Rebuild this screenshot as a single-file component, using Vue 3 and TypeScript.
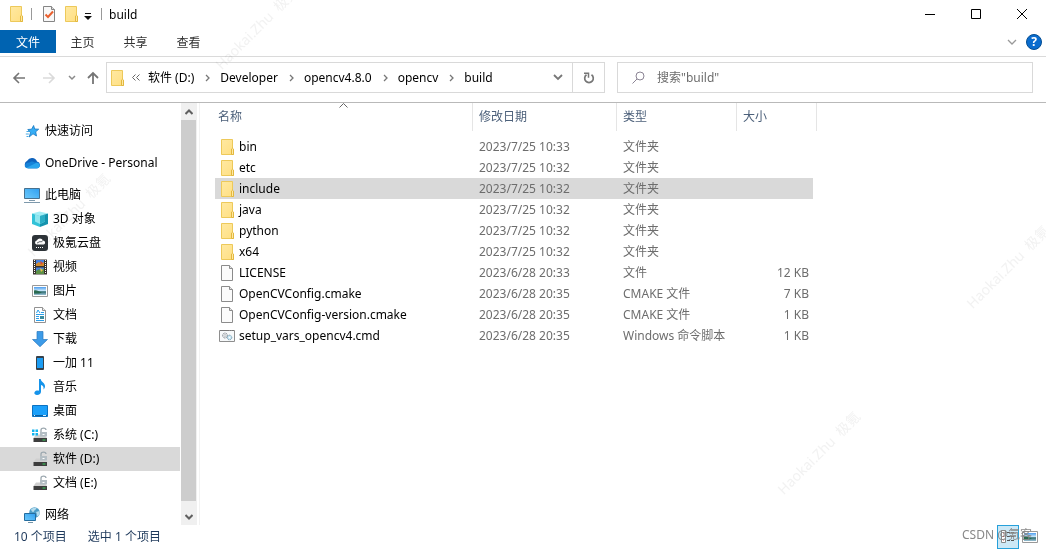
<script setup lang="ts">
interface TreeItem {
  label: string
  icon: string
  selected?: boolean
}

interface TreeGroup extends TreeItem {
  children?: TreeItem[]
}

interface FileRow {
  name: string
  icon: string
  date: string
  type: string
  size?: string
  selected?: boolean
}

const tabs: string[] = ['主页', '共享', '查看']
const crumbs: string[] = ['软件 (D:)', 'Developer', 'opencv4.8.0', 'opencv', 'build']

const tree: TreeGroup[] = [
  { label: '快速访问', icon: 'star' },
  { label: 'OneDrive - Personal', icon: 'cloud' },
  {
    label: '此电脑',
    icon: 'computer',
    children: [
      { label: '3D 对象', icon: 'cube' },
      { label: '极氪云盘', icon: 'disk-cloud' },
      { label: '视频', icon: 'video' },
      { label: '图片', icon: 'picture' },
      { label: '文档', icon: 'document' },
      { label: '下载', icon: 'download' },
      { label: '一加 11', icon: 'phone' },
      { label: '音乐', icon: 'music' },
      { label: '桌面', icon: 'desktop' },
      { label: '系统 (C:)', icon: 'drive-system' },
      { label: '软件 (D:)', icon: 'drive', selected: true },
      { label: '文档 (E:)', icon: 'drive' },
    ],
  },
  { label: '网络', icon: 'network' },
]

const columns = [
  { key: 'name', label: '名称' },
  { key: 'date', label: '修改日期' },
  { key: 'type', label: '类型' },
  { key: 'size', label: '大小' },
]

const files: FileRow[] = [
  { name: 'bin', icon: 'folder', date: '2023/7/25 10:33', type: '文件夹' },
  { name: 'etc', icon: 'folder', date: '2023/7/25 10:32', type: '文件夹' },
  { name: 'include', icon: 'folder', date: '2023/7/25 10:32', type: '文件夹', selected: true },
  { name: 'java', icon: 'folder', date: '2023/7/25 10:32', type: '文件夹' },
  { name: 'python', icon: 'folder', date: '2023/7/25 10:32', type: '文件夹' },
  { name: 'x64', icon: 'folder', date: '2023/7/25 10:32', type: '文件夹' },
  { name: 'LICENSE', icon: 'file', date: '2023/6/28 20:33', type: '文件', size: '12 KB' },
  { name: 'OpenCVConfig.cmake', icon: 'file', date: '2023/6/28 20:35', type: 'CMAKE 文件', size: '7 KB' },
  { name: 'OpenCVConfig-version.cmake', icon: 'file', date: '2023/6/28 20:35', type: 'CMAKE 文件', size: '1 KB' },
  { name: 'setup_vars_opencv4.cmd', icon: 'script', date: '2023/6/28 20:35', type: 'Windows 命令脚本', size: '1 KB' },
]

const watermarks = ['top', 'left', 'right', 'bottom']
</script>

<template>
  <div class="window">
    <svg class="sprite" aria-hidden="true">
      <defs>
        <linearGradient id="g-folder" x1="0" y1="0" x2="1" y2="1">
          <stop offset="0" stop-color="#ffe9a2" /><stop offset="1" stop-color="#ffdf82" />
        </linearGradient>
        <linearGradient id="g-screen" x1="0" y1="1" x2="1" y2="0">
          <stop offset="0" stop-color="#6cc8fb" /><stop offset="0.5" stop-color="#4fb5f5" /><stop offset="1" stop-color="#2e9df0" />
        </linearGradient>
        <linearGradient id="g-photo" x1="0" y1="0" x2="0" y2="1">
          <stop offset="0" stop-color="#4c9df0" /><stop offset="0.45" stop-color="#c7e6fa" /><stop offset="0.6" stop-color="#2c6a6e" /><stop offset="1" stop-color="#9cc3d8" />
        </linearGradient>
      </defs>
      <symbol id="i-folder" viewBox="0 0 16 16">
        <path d="M2.500.500h11v9l1 1v5h-12z" fill="url(#g-folder)" stroke="#edc95a" />
        <path d="M12.500 15.500v-5.500l1-.8 1 .8v5.500z" fill="#ffe9a2" stroke="#e3b83f" />
      </symbol>
      <symbol id="i-file" viewBox="0 0 16 16">
        <path d="M2.500.500h8l3 3v12h-11z" fill="#fbfbfb" stroke="#8b8b8b" />
        <path d="M10.500.500v3h3" fill="#e5e5e5" stroke="#8b8b8b" />
      </symbol>
      <symbol id="i-script" viewBox="0 0 16 16">
        <path d="M.5 2.500h15v11H.500z" fill="#f7f9fa" stroke="#8e8e8e" />
        <path d="M1 2.500h14" stroke="#777" stroke-dasharray="9 1 1 1" />
        <circle cx="6" cy="7.500" r="2.500" fill="#e3e7ea" stroke="#878d94" stroke-dasharray="1.200 .600" />
        <circle cx="6" cy="7.500" r="1" fill="#fff" stroke="#a5a9ad" stroke-width=".6" />
        <circle cx="10.500" cy="9.500" r="2.300" fill="#c8e5f3" stroke="#7199ae" stroke-dasharray="1.200 .600" />
        <circle cx="10.500" cy="9.500" r=".8" fill="#fff" />
      </symbol>
      <symbol id="i-check" viewBox="0 0 16 16">
        <path d="M2.500.500h8l3 3v12h-11z" fill="#f8f8f8" stroke="#858585" />
        <path d="M10.500.500v3h3" fill="#ddd" stroke="#858585" />
        <path d="M4.500 8.500l2.500 2.500 5-5.500" fill="none" stroke="#e9602f" stroke-width="2" />
      </symbol>
      <symbol id="i-star" viewBox="0 0 16 16">
        <path d="M9.600 2.500l1.100 3.500 4 .2-3 2.600.8 4.200-3.500-2.200-3.800 3.200 1.300-4.300L3.800 6.500l3.800-.3z" fill="#35adf5" stroke="#1476c0" stroke-width=".8" />
        <path d="M2.500 8.500h3M1.800 11h3M2.500 13.500h2" stroke="#49a9e3" />
      </symbol>
      <symbol id="i-cloud" viewBox="0 0 16 16">
        <path d="M4 13.300a4 4 0 0 1-.8-7.600A5.500 5.500 0 0 1 13 6.500a3.500 3.500 0 0 1 .5 6.800z" fill="#0f63bd" />
        <path d="M5.500 7.500c2-2 4-.7 5.500 0 5-1.500 6.500 5.800 1.500 5.800H4c-5 0-4-6 1.500-5.800z" fill="#1683d8" />
        <path d="M2 13l9-4.500c3-1 5 0 4.700 2.200-.2 1.700-1.200 2.600-3 2.600H4.500z" fill="#2aa5ed" />
      </symbol>
      <symbol id="i-computer" viewBox="0 0 16 16">
        <path d="M.5 1.500h15v10H.500z" fill="url(#g-screen)" stroke="#47718f" />
        <path d="M5 13.500h6M0 15.500h16" stroke="#7e99ac" />
      </symbol>
      <symbol id="i-cube" viewBox="0 0 16 16">
        <path d="M0 2.500L7.500.500 16 2.500 8 5z" fill="#a3edf5" />
        <path d="M0 2.500L8 5v11L0 13z" fill="#32c2d8" />
        <path d="M8 5l8-2.500V13l-8 3z" fill="#1593ad" />
        <path d="M3 3.500l5 1.500 5-1.500v7L8 13l-5-2.500z" fill="#8fe6ef" /><path d="M8 5v8l5-2.500v-7z" fill="#29adc5" />
      </symbol>
      <symbol id="i-disk-cloud" viewBox="0 0 16 16">
        <rect width="16" height="16" rx="3" fill="#2d3338" />
        <path d="M4.500 9.500a2 2 0 0 1 .3-3.900 3.500 3.500 0 0 1 6.200-.2 2.200 2.200 0 0 1 1 4.100z" fill="#fff" />
        <path d="M5 8l3-1.500 1 .5 2-1.500" fill="none" stroke="#444b50" stroke-width=".8" />
        <path d="M4 12.500h8" stroke="#fff" stroke-dasharray="1 1" />
      </symbol>
      <symbol id="i-video" viewBox="0 0 16 16">
        <path d="M1 .500h14v15H1z" fill="#39332f" />
        <path d="M2.500 1v14M13.500 1v14" stroke="#fff" stroke-dasharray="1 1" />
        <path d="M4 1h8v6H4zM4 8.500h8V15H4z" fill="#4a82df" />
        <path d="M4 5l3-2 2 2 3-2v4H4z" fill="#d58b2b" /><path d="M8 2l3 2-2 2z" fill="#e84a25" />
        <path d="M4 12l3-2 2 2 3-3v6H4z" fill="#5d9148" /><path d="M8 9l3 2-2 2z" fill="#f0c341" />
      </symbol>
      <symbol id="i-picture" viewBox="0 0 16 16">
        <path d="M.500 2.500h15v11H.500z" fill="#fff" stroke="#999" />
        <path d="M2 4h12v8H2z" fill="url(#g-photo)" />
        <path d="M2 7.500c3-1 4 1 8 2l-3 1H2z" fill="#2a6b50" />
      </symbol>
      <symbol id="i-document" viewBox="0 0 16 16">
        <path d="M2.500.500h8l3 3v12h-11z" fill="#fff" stroke="#929292" />
        <path d="M10.500.500v3h3" fill="#eee" stroke="#929292" />
        <path d="M4.500 6l1.500-3 2 3M9 5.500h3M4 7.500h8M4 9.500h3M4 11.500h3M4 13.500h8" fill="none" stroke="#2c9fea" />
        <path d="M8 9h4v3H8z" fill="#3a8b9e" />
      </symbol>
      <symbol id="i-download" viewBox="0 0 16 16">
        <path d="M5 .500h6v8h4.500L8 15.700.500 8.500H5z" fill="#3c9be8" stroke="#2a78bd" stroke-width=".7" />
      </symbol>
      <symbol id="i-phone" viewBox="0 0 16 16">
        <rect x="4" y="1" width="8" height="14" rx="1" fill="#37414a" />
        <path d="M5 3h6v10H5z" fill="#1c9df4" />
      </symbol>
      <symbol id="i-music" viewBox="0 0 16 16">
        <path d="M7 0h1.700c.2 3 4.600 3.700 4.300 7.500-.1 1.500-.8 2.200-1.500 3 .5-2.500-.5-4-2.500-4.500v6.500c0 2-1.500 3.500-4 3.500-3.500 0-3.500-4 0-4.500.8-.1 1.500 0 2 .2z" fill="#1593ea" />
      </symbol>
      <symbol id="i-desktop" viewBox="0 0 16 16">
        <path d="M.5 2.500h15v11H.500z" fill="#1ba0fa" stroke="#0b72c2" />
        <path d="M1 12.500h14" stroke="#0c5f9e" /><path d="M2 12.500h1M11 12.500h3" stroke="#d7efff" />
      </symbol>
      <symbol id="i-drive" viewBox="0 0 16 16">
        <path d="M4 7.500h8l3 3.500H1.500z" fill="#cfcfcf" />
        <path d="M1.500 11h13.500v4H1.500z" fill="#3d3d3d" /><path d="M10.500 13h3" stroke="#36d35b" />
        <path d="M8 5h7v4.500H8z" fill="#b4bec4" /><path d="M9 5V3C9 .5 14 .5 14 3" fill="none" stroke="#9ca8af" stroke-width="1.300" />
        <path d="M10.500 7.500h2" stroke="#fff" />
      </symbol>
      <symbol id="i-drive-system" viewBox="0 0 16 16">
        <use href="#i-drive" />
        <path d="M0 2.500h2.500V5H0zM3.500 2.500H6V5H3.500zM0 6h2.500v2.500H0zM3.500 6H6v2.500H3.500z" fill="#14b4ee" />
      </symbol>
      <symbol id="i-network" viewBox="0 0 16 16">
        <circle cx="10.500" cy="5.500" r="5.300" fill="#4d9dc7" />
        <path d="M7 2.500c1.500-2 4-2 5.500-1.500-.5 2-2.500 2-3 4-1 .5-2-1-2.500-2.500zM12 5l3.500-1c.8 2-.5 4.500-2 5.500-1-1-.3-3-1.500-4.500z" fill="#b5dced" />
        <path d="M.500 6.500h11v7H.500z" fill="url(#g-screen)" stroke="#246d9f" />
        <path d="M4 15.500h5" stroke="#7494a7" />
      </symbol>
    </svg>

    <header class="titlebar">
      <svg class="icon"><use href="#i-folder" /></svg>
      <span class="bar"></span>
      <button type="button" class="tool" aria-label="属性"><svg class="icon"><use href="#i-check" /></svg></button>
      <button type="button" class="tool" aria-label="新建文件夹"><svg class="icon"><use href="#i-folder" /></svg></button>
      <button type="button" class="tool customize" aria-label="自定义快速访问工具栏">
        <svg width="8" height="8" viewBox="0 0 8 8"><path d="M1 1h6v1H1zM0 4h8L4 8z" fill="#111" /></svg>
      </button>
      <span class="bar"></span>
      <h1 class="title">build</h1>
      <div class="controls">
        <button type="button" aria-label="最小化"><svg viewBox="0 0 10 10"><path d="M0 5.500h10" /></svg></button>
        <button type="button" aria-label="最大化"><svg viewBox="0 0 10 10"><path d="M.5.500h9v9h-9z" /></svg></button>
        <button type="button" aria-label="关闭"><svg viewBox="0 0 10 10"><path d="M0 0l10 10M10 0L0 10" /></svg></button>
      </div>
    </header>

    <div class="ribbon">
      <button type="button" class="tab file-tab">文件</button>
      <button v-for="tab in tabs" :key="tab" type="button" class="tab">{{ tab }}</button>
      <button type="button" class="expand" aria-label="展开功能区">
        <svg width="10" height="6" viewBox="0 0 10 6"><path d="M1 1l4 4 4-4" fill="none" stroke="#999" stroke-width="1.300" /></svg>
      </button>
      <button type="button" class="help" aria-label="帮助">?</button>
    </div>

    <div class="navigation">
      <button type="button" class="nav back" aria-label="后退">
        <svg width="14" height="12" viewBox="0 0 14 12"><path d="M13 6H2M7 1L2 6l5 5" fill="none" stroke="#757575" stroke-width="1.600" /></svg>
      </button>
      <button type="button" class="nav forward" aria-label="前进">
        <svg width="14" height="12" viewBox="0 0 14 12"><path d="M1 6h11M7 1l5 5-5 5" fill="none" stroke="#dadada" stroke-width="1.600" /></svg>
      </button>
      <button type="button" class="nav recent" aria-label="最近位置">
        <svg width="8" height="6" viewBox="0 0 8 6"><path d="M1 1l3 3 3-3" fill="none" stroke="#8a8a8a" stroke-width="1.500" /></svg>
      </button>
      <button type="button" class="nav up" aria-label="上移">
        <svg width="12" height="14" viewBox="0 0 12 14"><path d="M6 13V2M1 7l5-5 5 5" fill="none" stroke="#757575" stroke-width="1.800" /></svg>
      </button>
      <div class="address">
        <svg class="icon"><use href="#i-folder" /></svg>
        <svg class="overflow" width="8" height="7" viewBox="0 0 8 7"><path d="M3.500.500l-3 3 3 3M7.500.500l-3 3 3 3" fill="none" stroke="#666" /></svg>
        <template v-for="(crumb, i) in crumbs" :key="crumb">
          <svg v-if="i" class="separator" width="5" height="8" viewBox="0 0 5 8"><path d="M1 1l3 3-3 3" fill="none" stroke="#777" stroke-width="1.300" /></svg>
          <button type="button" class="crumb">{{ crumb }}</button>
        </template>
        <button type="button" class="history" aria-label="以前的位置">
          <svg width="10" height="7" viewBox="0 0 10 7"><path d="M1 1l4 4 4-4" fill="none" stroke="#777" stroke-width="1.800" /></svg>
        </button>
        <button type="button" class="refresh" aria-label="刷新">
          <svg width="12" height="12" viewBox="0 0 12 12"><path d="M3.500 2.800A4.300 4.300 0 1 0 8.500 2.800" fill="none" stroke="#777" stroke-width="1.700" /><path d="M1 1.200h4.500v4.500" fill="none" stroke="#777" stroke-width="1.500" /></svg>
        </button>
      </div>
      <label class="search">
        <svg width="13" height="13" viewBox="0 0 13 13"><circle cx="8" cy="5" r="4" fill="none" stroke="#8b8494" /><path d="M5 8L.500 12.500" stroke="#8b8494" /></svg>
        <input type="text" aria-label="搜索" placeholder='搜索"build"' />
      </label>
    </div>

    <main class="content">
      <nav class="tree" aria-label="导航窗格">
        <div v-for="group in tree" :key="group.label" class="group">
          <a href="#" class="node"><svg class="icon"><use :href="'#i-' + group.icon" /></svg>{{ group.label }}</a>
          <a
            v-for="item in group.children"
            :key="item.label"
            href="#"
            class="node child"
            :class="{ selected: item.selected }"
          ><svg class="icon"><use :href="'#i-' + item.icon" /></svg>{{ item.label }}</a>
        </div>
      </nav>
      <div class="scrollbar">
        <button type="button" aria-label="向上滚动"><svg width="8" height="6" viewBox="0 0 8 6"><path d="M.500 5L4 1.500 7.500 5" /></svg></button>
        <span class="thumb"></span>
        <button type="button" aria-label="向下滚动"><svg width="8" height="6" viewBox="0 0 8 6"><path d="M.500 1L4 4.500 7.500 1" /></svg></button>
      </div>
      <section class="files">
        <table>
          <colgroup><col v-for="c in columns" :key="c.key" :class="'col-' + c.key" /></colgroup>
          <thead>
            <tr>
              <th v-for="c in columns" :key="c.key" scope="col">
                <button type="button">{{ c.label }}</button>
                <svg v-if="c.key === 'name'" class="sort" width="9" height="5" viewBox="0 0 9 5"><path d="M.500 4.500l4-4 4 4" fill="none" stroke="#666" /></svg>
              </th>
            </tr>
          </thead>
          <tbody>
            <tr v-for="f in files" :key="f.name" :class="{ selected: f.selected }">
              <td class="name"><span><svg class="icon"><use :href="'#i-' + f.icon" /></svg>{{ f.name }}</span></td>
              <td>{{ f.date }}</td>
              <td>{{ f.type }}</td>
              <td class="size">{{ f.size }}</td>
            </tr>
          </tbody>
        </table>
      </section>
    </main>

    <footer class="status">
      <span>10 个项目</span>
      <span>选中 1 个项目</span>
      <div class="views">
        <button type="button" class="view active" aria-label="详细信息">
          <svg width="14" height="14" viewBox="0 0 14 14">
            <path d="M.500.500h4v12h-4z" fill="#fff" stroke="#888" /><path d="M2 3h1M2 6.500h1M2 10h1" stroke="#c44" /><path d="M6 2.500h3M10 2.500h3M6 6.500h3M10 6.500h3M6 10.500h3M10 10.500h3" stroke="#555" />
          </svg>
        </button>
        <button type="button" class="view" aria-label="大缩略图"><svg class="icon"><use href="#i-picture" /></svg></button>
      </div>
      <span class="credit">CSDN @氪客</span>
    </footer>

    <span v-for="w in watermarks" :key="w" class="watermark" :class="w" aria-hidden="true">Haokai.Zhu&nbsp; 极氪</span>
  </div>
</template>

<style>
body {
  background: #fff;
}
</style>

<style scoped>
.window {
  position: relative;
  display: flex;
  flex-direction: column;
  height: 100vh;
  overflow: hidden;
  background: #fff;
  color: #000;
  font: 12px/16px "Noto Sans", "Noto Sans CJK SC", sans-serif;
}

.window * {
  box-sizing: border-box;
}

.sprite {
  position: absolute;
  width: 0;
  height: 0;
}

svg {
  flex: none;
  display: block;
}

.icon {
  width: 16px;
  height: 16px;
}

button {
  display: flex;
  align-items: center;
  justify-content: center;
  padding: 0;
  border: 0;
  background: none;
  color: inherit;
  font: inherit;
}

.titlebar {
  display: flex;
  align-items: center;
  height: 30px;
  padding: 0 1px 2px 8px;
}

.bar {
  width: 1px;
  height: 12px;
  margin: 0 6px 0 7px;
  background: #999;
}

.tool {
  width: 22px;
  height: 22px;
}

.customize {
  width: 12px;
  padding-top: 3px;
}

.title {
  margin: 0;
  padding: 2px 0 0 1px;
  font-size: 12px;
  font-weight: 400;
}

.controls {
  display: flex;
  align-self: stretch;
  margin-left: auto;
}

.controls button {
  width: 46px;
}

.controls svg {
  width: 10px;
  height: 10px;
  fill: none;
  stroke: #000;
}

.ribbon {
  display: flex;
  align-items: center;
  height: 27px;
  padding: 0 4px 3px 0;
  border-bottom: 1px solid #dadada;
}

.tab {
  width: 53px;
  height: 23px;
  padding-top: 2px;
  color: #333;
}

.file-tab {
  width: 56px;
  background: #0063b1;
  color: #fff;
}

.expand {
  width: 20px;
  height: 20px;
  margin-left: auto;
}

.help {
  width: 16px;
  height: 16px;
  margin-left: 4px;
  border: 1px solid #034d92;
  border-radius: 50%;
  background: #0a6cce;
  color: #fff;
  font-weight: 700;
}

.navigation {
  display: flex;
  align-items: center;
  height: 46px;
  padding: 0 13px 4px 12px;
  border-bottom: 1px solid #b9b9b9;
}

.nav {
  width: 14px;
  height: 30px;
}

.forward {
  margin-left: 16px;
}

.recent {
  margin-left: 9px;
}

.up {
  margin: 0 6px 0 7px;
}

.address {
  display: flex;
  flex: 1 1 499px;
  align-items: center;
  height: 31px;
  margin-right: 12px;
  padding-left: 2px;
  border: 1px solid #d9d9d9;
}

.overflow {
  margin: 0 8px 0 7px;
}

.separator {
  margin: 0 10px 0 11px;
}

.crumb {
  height: 24px;
  white-space: nowrap;
}

.history {
  width: 28px;
  height: 29px;
  margin-left: auto;
}

.refresh {
  width: 32px;
  height: 29px;
  border-left: 1px solid #d9d9d9;
}

.search {
  display: flex;
  flex: 1 1 416px;
  align-items: center;
  gap: 12px;
  height: 31px;
  padding-left: 14px;
  border: 1px solid #d9d9d9;
}

.search input {
  flex: 1;
  min-width: 0;
  padding: 0;
  border: 0;
  outline: 0;
  background: none;
  font: inherit;
}

.search input::placeholder {
  color: #6d6d6d;
  opacity: 1;
}

.content {
  display: flex;
  flex: 1;
  min-height: 0;
}

.tree {
  width: 180px;
  padding-top: 16px;
  overflow: hidden;
}

.group {
  margin-bottom: 8px;
}

.node {
  display: flex;
  align-items: center;
  gap: 5px;
  height: 24px;
  padding-left: 24px;
  color: #000;
  text-decoration: none;
  white-space: nowrap;
}

.child {
  padding-left: 32px;
}

.node.selected {
  background: #d9d9d9;
}

.scrollbar {
  display: flex;
  flex-direction: column;
  width: 16px;
  margin-left: 1px;
  background: #f0f0f0;
}

.scrollbar button {
  width: 16px;
  height: 17px;
}

.scrollbar button:last-child {
  height: 24px;
  padding-top: 7px;
}

.scrollbar path {
  fill: none;
  stroke: #606060;
  stroke-width: 2px;
}

.thumb {
  flex: 1;
  width: 15px;
  background: #cdcdcd;
}

.files {
  flex: 1;
  min-width: 0;
  margin-left: 2px;
  padding-left: 15px;
  border-left: 1px solid #f2f2f2;
  overflow: hidden;
}

table {
  width: 602px;
  table-layout: fixed;
  border-collapse: separate;
  border-spacing: 0;
}

.col-name {
  width: 258px;
}

.col-date {
  width: 144px;
}

.col-type {
  width: 120px;
}

.col-size {
  width: 80px;
}

th {
  position: relative;
  height: 28px;
  padding: 0 0 0 6px;
  border-right: 1px solid #e5e5e5;
  color: #4c607a;
  font-weight: 400;
}

th:first-child {
  padding-left: 3px;
}

.sort {
  position: absolute;
  top: 0;
  right: 0;
  left: 0;
  margin: 0 auto;
}

tbody::before {
  content: "";
  display: block;
  height: 5px;
}

td {
  height: 21px;
  padding: 0 0 0 6px;
  color: #6d6d6d;
  white-space: nowrap;
}

td.name {
  padding-left: 4px;
  color: #000;
}

.name span {
  display: flex;
  align-items: center;
  gap: 4px;
}

td.size {
  padding-right: 8px;
  text-align: right;
}

tr.selected td {
  background: linear-gradient(#d9d9d9, #d9d9d9) no-repeat;
}

tr.selected .size {
  background-size: calc(100% - 4px) 100%;
}

.status {
  position: relative;
  display: flex;
  align-items: center;
  height: 24px;
  padding: 0 5px 0 14px;
  color: #1e395b;
}

.status > span {
  margin-right: 21px;
}

.views {
  display: flex;
  margin-left: auto;
}

.view {
  width: 22px;
  height: 24px;
}

.view.active {
  border: 1px solid #26a0da;
  background: #cce8f6;
}

.status > .credit {
  position: absolute;
  right: 14px;
  bottom: 6px;
  margin: 0;
  color: #888;
}

.watermark {
  position: absolute;
  width: 120px;
  margin: -10px 0 0 -60px;
  color: #f2f2f2;
  font-size: 14px;
  line-height: 20px;
  text-align: center;
  white-space: nowrap;
  transform: rotate(-45deg);
  mix-blend-mode: multiply;
  pointer-events: none;
}

.watermark.top {
  top: 28px;
  left: 257px;
}

.watermark.left {
  top: 215px;
  left: 69px;
}

.watermark.right {
  top: 267px;
  right: -22px;
}

.watermark.bottom {
  bottom: 86px;
  right: 167px;
}
</style>
